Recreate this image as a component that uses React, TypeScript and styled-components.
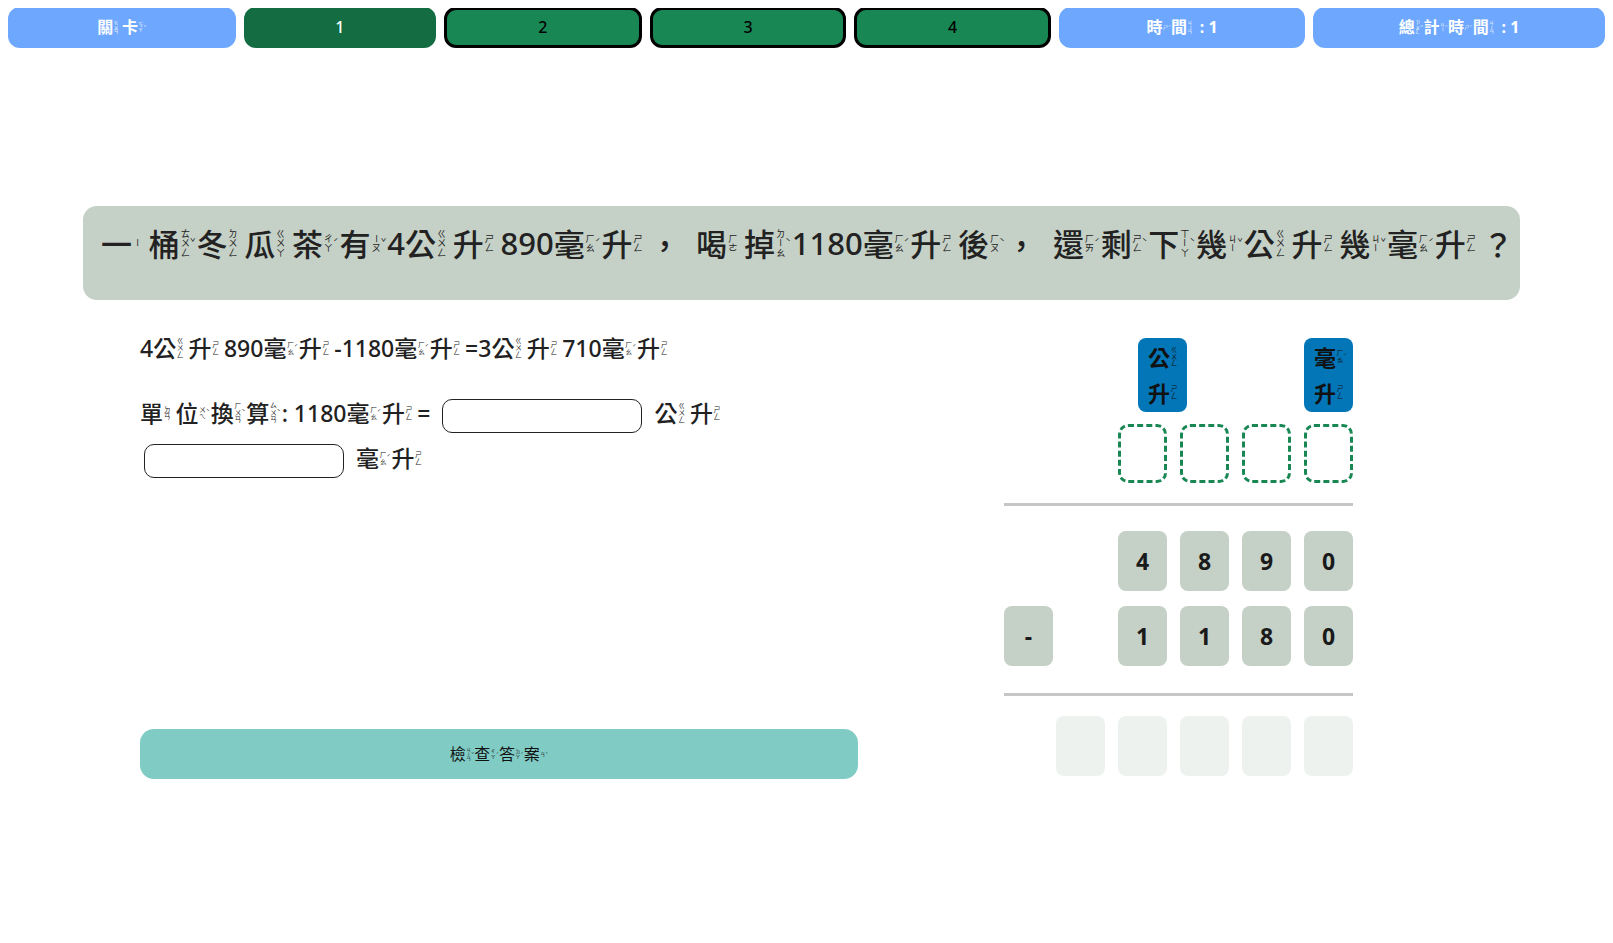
import React from 'react';
import styled, { createGlobalStyle, css } from 'styled-components';

const ZY: Record<string, string> = {
  '關': 'ㄍㄨㄢ', '卡': 'ㄎㄚˇ', '時': 'ㄕˊ', '間': 'ㄐㄧㄢ', '總': 'ㄗㄨㄥˇ', '計': 'ㄐㄧˋ',
  '一': 'ㄧ', '桶': 'ㄊㄨㄥˇ', '冬': 'ㄉㄨㄥ', '瓜': 'ㄍㄨㄚ', '茶': 'ㄔㄚˊ', '有': 'ㄧㄡˇ',
  '公': 'ㄍㄨㄥ', '升': 'ㄕㄥ', '毫': 'ㄏㄠˊ', '喝': 'ㄏㄜ', '掉': 'ㄉㄧㄠˋ', '後': 'ㄏㄡˋ',
  '還': 'ㄏㄞˊ', '剩': 'ㄕㄥˋ', '下': 'ㄒㄧㄚˋ', '幾': 'ㄐㄧˇ', '單': 'ㄉㄢ', '位': 'ㄨㄟˋ',
  '換': 'ㄏㄨㄢˋ', '算': 'ㄙㄨㄢˋ', '檢': 'ㄐㄧㄢˇ', '查': 'ㄔㄚˊ', '答': 'ㄉㄚˊ', '案': 'ㄢˋ',
};

const TONES = 'ˊˇˋ˙';

const GlobalStyle = createGlobalStyle`
  * { box-sizing: border-box; }
  html, body { background: #ffffff; }
  body {
    margin: 8px;
    font-family: "Noto Sans", "Noto Sans CJK TC", sans-serif;
    color: #212529;
  }
`;

/* ---------- zhuyin annotated text ---------- */
const Ruby = styled.span`
  display: inline-flex;
  align-items: center;
  white-space: nowrap;
`;

const Han = styled.span`
  display: inline-block;
  line-height: 1.2;
  font-family: "Noto Sans CJK TC", sans-serif;
`;

const Anno = styled.span`
  display: inline-flex;
  align-items: center;
  font-size: 0.3em;
  margin-left: 0.1em;
  line-height: 1;
  font-weight: 400;
  font-family: "Noto Sans CJK TC", sans-serif;
`;

const AnnoColumn = styled.span`
  display: inline-flex;
  flex-direction: column;
  align-items: center;
  width: 1em;
`;

const Sym = styled.span<{ $turn?: boolean }>`
  display: block;
  height: 1em;
  line-height: 1;
  ${(p) => p.$turn && css`transform: rotate(90deg);`}
`;

const Tone = styled.span`
  display: inline-block;
  width: 0.7em;
  line-height: 1;
`;

const Zh: React.FC<{ ch: string; zy: string }> = ({ ch, zy }) => {
  const chars = Array.from(zy);
  const last = chars[chars.length - 1];
  const tone = TONES.includes(last) ? last : '';
  const syms = tone ? chars.slice(0, -1) : chars;
  return (
    <Ruby>
      <Han>{ch}</Han>
      <Anno>
        <AnnoColumn>
          {syms.map((s, i) => (
            <Sym key={i} $turn={s === 'ㄧ'}>{s}</Sym>
          ))}
        </AnnoColumn>
        <Tone>{tone}</Tone>
      </Anno>
    </Ruby>
  );
};

const ZText: React.FC<{ text: string }> = ({ text }) => {
  const parts: React.ReactNode[] = [];
  let buf = '';
  Array.from(text).forEach((ch, i) => {
    const z = ZY[ch];
    if (z) {
      if (buf) {
        parts.push(<span key={'t' + i}>{buf}</span>);
        buf = '';
      }
      parts.push(<Zh key={i} ch={ch} zy={z} />);
    } else {
      buf += ch;
    }
  });
  if (buf) parts.push(<span key="end">{buf}</span>);
  return <>{parts}</>;
};

/* ---------- top bar ---------- */
const TopBar = styled.nav`
  display: flex;
  gap: 8px;
  height: 41px;
  margin-top: -1px;
`;

type Variant = 'info' | 'current' | 'level';

const NavButton = styled.button<{ $variant: Variant; $size: number }>`
  flex: ${(p) => p.$size} 1 0;
  min-width: 0;
  border-radius: 12px;
  font-family: "Noto Sans", "Noto Sans CJK TC", sans-serif;
  font-size: 16px;
  display: flex;
  align-items: center;
  justify-content: center;
  padding: 0 8px 1px;
  white-space: pre;
  ${(p) =>
    p.$variant === 'info'
      ? css`
          background: #6ea8fe;
          color: #ffffff;
          font-weight: 700;
          border: none;
        `
      : p.$variant === 'current'
      ? css`
          background: #146c43;
          color: #ffffff;
          font-weight: 500;
          border: none;
        `
      : css`
          background: #198754;
          color: #000000;
          font-weight: 500;
          border: 3px solid #000000;
        `}
`;

/* ---------- question ---------- */
const QuestionBox = styled.section`
  margin: 158px 85px 0 75px;
  height: 94px;
  background: #c5d0c6;
  border-radius: 14px;
  display: flex;
  align-items: center;
  padding: 0 14px 20px 18px;
  font-size: 31px;
  font-weight: 500;
  color: #222222;
  white-space: pre;
`;

/* ---------- workspace ---------- */
const Workspace = styled.main`
  display: flex;
  align-items: stretch;
  gap: 146px;
  margin-top: 32px;
  padding-left: 132px;
`;

const WorkPanel = styled.div`
  width: 718px;
  display: flex;
  flex-direction: column;
`;

const Equation = styled.p`
  margin: 0;
  font-size: 23px;
  font-weight: 500;
  line-height: 32px;
  color: #212121;
`;

const ConvertLine = styled.div`
  display: flex;
  flex-wrap: wrap;
  align-items: center;
  gap: 11px 8px;
  margin-top: 35px;
  font-size: 23px;
  font-weight: 500;
  color: #212121;
`;

const Phrase = styled.span`
  display: block;
  height: 34px;
  line-height: 27px;
  white-space: pre;
`;

const AnswerInput = styled.input`
  width: 200px;
  height: 34px;
  margin: 0 4px;
  border: 1.5px solid #222222;
  border-radius: 10px;
  background: #ffffff;
`;

const CheckButton = styled.button`
  flex: 0 0 50px;
  margin-top: auto;
  width: 100%;
  height: 50px;
  background: #80cbc4;
  border: none;
  border-radius: 14px;
  font-family: "Noto Sans CJK TC", sans-serif;
  font-size: 16px;
  color: #111111;
  display: flex;
  align-items: center;
  justify-content: center;
`;

const Board = styled.div`
  width: 349px;
  display: flex;
  flex-direction: column;
  padding: 6px 0 3px;
`;

const CellRow = styled.div<{ $gap?: string; $top: number }>`
  display: flex;
  justify-content: flex-end;
  gap: ${(p) => p.$gap ?? '13px'};
  margin-top: ${(p) => p.$top}px;
`;

const UnitBadge = styled.div`
  width: 49px;
  height: 74px;
  background: #0376b8;
  border-radius: 8px;
  display: flex;
  flex-direction: column;
  align-items: center;
  justify-content: center;
  font-size: 22px;
  font-weight: 700;
  color: #111111;
  padding: 0 0 2px 5px;
`;

const BadgeLine = styled.div`
  display: flex;
  height: 37px;
  align-items: center;
`;

const DropSlot = styled.div`
  width: 49px;
  height: 59px;
  border: 3px dashed #198754;
  border-radius: 10px;
`;

const Divider = styled.div<{ $top: number }>`
  height: 3px;
  background: #c6c6c6;
  margin-top: ${(p) => p.$top}px;
`;

const DigitCell = styled.div<{ $ghost?: boolean; $lead?: boolean }>`
  width: 49px;
  height: 60px;
  border-radius: 8px;
  background: ${(p) => (p.$ghost ? '#eef2ee' : '#c5d0c6')};
  display: flex;
  align-items: center;
  justify-content: center;
  font-size: 23px;
  font-weight: 700;
  color: #1a1a1a;
  ${(p) => p.$lead && css`margin-right: auto;`}
`;

const levels = ['1', '2', '3', '4'];

export default function App() {
  return (
    <>
      <GlobalStyle />
      <TopBar>
        <NavButton $variant="info" $size={231}>
          <ZText text="關卡" />
        </NavButton>
        {levels.map((l, i) => (
          <NavButton key={l} $variant={i === 0 ? 'current' : 'level'} $size={i < 2 ? 192 : 190.5}>
            {l}
          </NavButton>
        ))}
        <NavButton $variant="info" $size={251}>
          <ZText text="時間 : 1" />
        </NavButton>
        <NavButton $variant="info" $size={301}>
          <ZText text="總計時間 : 1" />
        </NavButton>
      </TopBar>

      <QuestionBox>
        <ZText text="一桶冬瓜茶有4公升890毫升，  喝掉1180毫升後，  還剩下幾公升幾毫升？" />
      </QuestionBox>

      <Workspace>
        <WorkPanel>
          <Equation>
            <ZText text="4公升890毫升-1180毫升=3公升710毫升" />
          </Equation>
          <ConvertLine>
            <Phrase>
              <ZText text="單位換算: 1180毫升=" />
            </Phrase>
            <AnswerInput type="text" />
            <Phrase>
              <ZText text="公升" />
            </Phrase>
            <AnswerInput type="text" />
            <Phrase>
              <ZText text="毫升" />
            </Phrase>
          </ConvertLine>
          <CheckButton>
            <ZText text="檢查答案" />
          </CheckButton>
        </WorkPanel>

        <Board>
          <CellRow $top={0} $gap="117px">
            <UnitBadge>
              <BadgeLine><ZText text="公" /></BadgeLine>
              <BadgeLine><ZText text="升" /></BadgeLine>
            </UnitBadge>
            <UnitBadge>
              <BadgeLine><ZText text="毫" /></BadgeLine>
              <BadgeLine><ZText text="升" /></BadgeLine>
            </UnitBadge>
          </CellRow>
          <CellRow $top={12}>
            <DropSlot />
            <DropSlot />
            <DropSlot />
            <DropSlot />
          </CellRow>
          <Divider $top={20} />
          <CellRow $top={25}>
            {['4', '8', '9', '0'].map((d, i) => (
              <DigitCell key={i}>{d}</DigitCell>
            ))}
          </CellRow>
          <CellRow $top={15}>
            <DigitCell $lead>-</DigitCell>
            {['1', '1', '8', '0'].map((d, i) => (
              <DigitCell key={i}>{d}</DigitCell>
            ))}
          </CellRow>
          <Divider $top={27} />
          <CellRow $top={20}>
            {[0, 1, 2, 3, 4].map((i) => (
              <DigitCell key={i} $ghost />
            ))}
          </CellRow>
        </Board>
      </Workspace>
    </>
  );
}
